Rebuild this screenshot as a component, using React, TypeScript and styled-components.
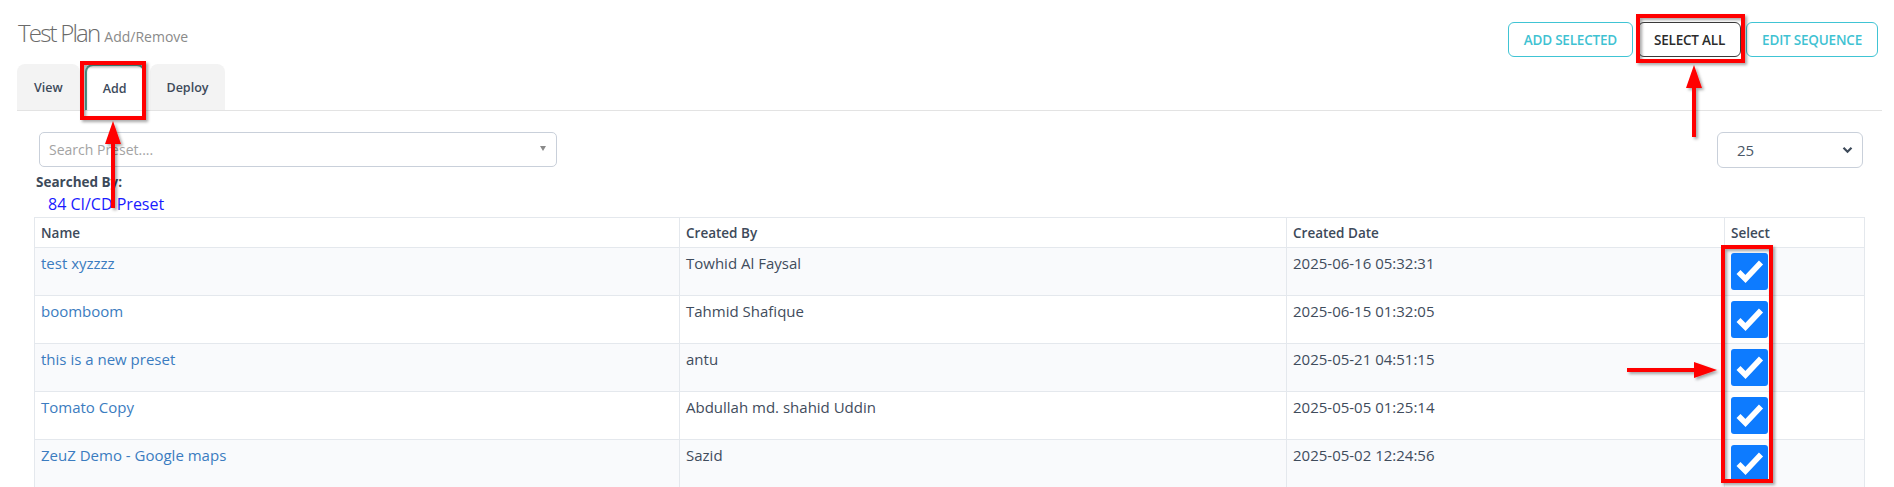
import * as React from 'react';
import styled, { createGlobalStyle } from 'styled-components';

const GlobalStyle = createGlobalStyle`
  body {
    margin: 0;
    background: #fff;
    font-family: 'Open Sans', 'Liberation Sans', sans-serif;
    color: #3d4a5a;
  }
`;

type Preset = {
  name: string;
  createdBy: string;
  createdDate: string;
};

const presets: Preset[] = [
  { name: 'test xyzzzz', createdBy: 'Towhid Al Faysal', createdDate: '2025-06-16 05:32:31' },
  { name: 'boomboom', createdBy: 'Tahmid Shafique', createdDate: '2025-06-15 01:32:05' },
  { name: 'this is a new preset', createdBy: 'antu', createdDate: '2025-05-21 04:51:15' },
  { name: 'Tomato Copy', createdBy: 'Abdullah md. shahid Uddin', createdDate: '2025-05-05 01:25:14' },
  { name: 'ZeuZ Demo - Google maps', createdBy: 'Sazid', createdDate: '2025-05-02 12:24:56' },
];

const tabs = ['View', 'Add', 'Deploy'];

export default function App() {
  return (
    <Page>
      <GlobalStyle />
      <TopBar>
        <Title>
          <TitleMain>Test Plan</TitleMain>
          <Subtitle>Add/Remove</Subtitle>
        </Title>
        <ButtonGroup>
          <OutlineButton>Add Selected</OutlineButton>
          <OutlineButton dark>Select All</OutlineButton>
          <OutlineButton>Edit Sequence</OutlineButton>
        </ButtonGroup>
      </TopBar>

      <TabBar>
        {tabs.map((t) => (
          <Tab key={t} active={t === 'Add'}>
            {t}
          </Tab>
        ))}
      </TabBar>

      <FilterRow>
        <SearchBox>
          <Placeholder>Search Preset....</Placeholder>
          <Caret />
        </SearchBox>
        <PageSize>
          <span>25</span>
          <svg width="11" height="8" viewBox="0 0 11 8">
            <path d="M1.5 1.8 L5.5 5.8 L9.5 1.8" fill="none" stroke="#3d4a5a" strokeWidth="2.2" />
          </svg>
        </PageSize>
      </FilterRow>

      <SearchedBy>Searched By:</SearchedBy>
      <ResultCount>84 CI/CD Preset</ResultCount>

      <TableWrap>
        <Table>
          <colgroup>
            <col style={{ width: 645 }} />
            <col style={{ width: 607 }} />
            <col style={{ width: 438 }} />
            <col style={{ width: 140 }} />
          </colgroup>
          <thead>
            <tr>
              <Th>Name</Th>
              <Th>Created By</Th>
              <Th>Created Date</Th>
              <Th>Select</Th>
            </tr>
          </thead>
          <tbody>
            {presets.map((p, i) => (
              <Row key={p.name} striped={i % 2 === 0}>
                <Td>
                  <NameLink>{p.name}</NameLink>
                </Td>
                <Td>{p.createdBy}</Td>
                <Td>{p.createdDate}</Td>
                <Td>
                  <CheckBox>
                    <svg width="37" height="37" viewBox="0 0 37 37">
                      <path d="M7.5 19 L14.5 26 L30 9.5" fill="none" stroke="#fff" strokeWidth="5.6" />
                    </svg>
                  </CheckBox>
                </Td>
              </Row>
            ))}
          </tbody>
        </Table>
      </TableWrap>

      <Annotations width="1894" height="487" viewBox="0 0 1894 487">
        <defs>
          <filter id="shadow" x="-20%" y="-20%" width="140%" height="140%">
            <feDropShadow dx="2" dy="2" stdDeviation="1.5" floodColor="#000" floodOpacity="0.35" />
          </filter>
        </defs>
        <g filter="url(#shadow)" fill="none" stroke="#f00" strokeWidth="4">
          <rect x="82" y="63" width="62" height="55" />
          <rect x="1638" y="16" width="105" height="45" />
          <rect x="1723" y="247" width="48" height="234" />
        </g>
        <g filter="url(#shadow)" fill="#f00">
          <rect x="111" y="140" width="4" height="68" />
          <polygon points="113,121 105,144 121,144" />
          <rect x="1692" y="84" width="4" height="53" />
          <polygon points="1694,65 1686,88 1702,88" />
          <rect x="1627" y="368" width="70" height="4" />
          <polygon points="1717,370 1694,362 1694,378" />
        </g>
      </Annotations>
    </Page>
  );
}

const Page = styled.div`
  position: relative;
  width: 1894px;
  height: 487px;
  overflow: hidden;
  padding: 0 12px 0 17px;
  box-sizing: border-box;
`;

const TopBar = styled.div`
  display: flex;
  justify-content: space-between;
  align-items: flex-start;
  height: 64px;
`;

const Title = styled.h1`
  margin: 18px 0 0 1px;
  display: flex;
  align-items: baseline;
  gap: 5px;
  font-weight: 400;
`;

const TitleMain = styled.span`
  font-size: 24px;
  font-weight: 300;
  line-height: 30px;
  color: #6a6a6a;
  letter-spacing: -1.8px;
`;

const Subtitle = styled.small`
  font-size: 14px;
  font-weight: 400;
  color: #8a8a8a;
`;

const ButtonGroup = styled.div`
  display: flex;
  gap: 5px;
  margin: 22px 4px 0 0;
`;

const OutlineButton = styled.button<{ dark?: boolean }>`
  height: 35px;
  padding: 0 15px;
  background: #fff;
  border: 1px solid ${({ dark }) => (dark ? '#3a3a3a' : '#40c4d4')};
  border-radius: 6px;
  color: ${({ dark }) => (dark ? '#2b2b2b' : '#3fc2d2')};
  font-family: 'Open Sans', sans-serif;
  font-size: 13.5px;
  font-weight: 600;
  text-transform: uppercase;
  letter-spacing: -0.2px;
`;

const TabBar = styled.div`
  display: flex;
  gap: 5px;
  height: 46px;
  border-bottom: 1px solid #e3e3e3;
`;

const Tab = styled.div<{ active?: boolean }>`
  display: flex;
  align-items: center;
  padding: 0 ${({ active }) => (active ? '16px' : '17px')};
  background: ${({ active }) => (active ? '#fff' : '#f3f3f3')};
  border: ${({ active }) => (active ? '2px solid #55a597' : 'none')};
  border-bottom: none;
  border-radius: 8px 8px 0 0;
  font-size: 12.5px;
  font-weight: 600;
  color: #3d4a5a;
`;

const FilterRow = styled.div`
  display: flex;
  justify-content: space-between;
  margin: 21px 19px 0 22px;
`;

const SearchBox = styled.div`
  width: 518px;
  height: 35px;
  box-sizing: border-box;
  border: 1px solid #c9d0da;
  border-radius: 5px;
  display: flex;
  align-items: center;
  justify-content: space-between;
  padding: 0 10px 0 9px;
`;

const Placeholder = styled.span`
  font-size: 14px;
  color: #a3a3a3;
`;

const Caret = styled.span`
  width: 0;
  height: 0;
  border-left: 3.5px solid transparent;
  border-right: 3.5px solid transparent;
  border-top: 5px solid #8a8a8a;
  margin-top: -3px;
`;

const PageSize = styled.div`
  width: 146px;
  height: 36px;
  box-sizing: border-box;
  border: 1px solid #c9d0da;
  border-radius: 6px;
  display: flex;
  align-items: center;
  justify-content: space-between;
  padding: 0 9px 0 19px;
  font-size: 15px;
  color: #4a5868;
`;

const SearchedBy = styled.div`
  margin: 4px 0 0 19px;
  font-size: 13.5px;
  font-weight: 700;
  line-height: 20px;
  color: #3d4a5a;
`;

const ResultCount = styled.div`
  margin-left: 31px;
  font-size: 16px;
  line-height: 25px;
  color: #1a1aff;
`;

const TableWrap = styled.div`
  margin: 0 18px 0 17px;
`;

const Table = styled.table`
  width: 100%;
  table-layout: fixed;
  border-collapse: collapse;
  border: 1px solid #e4e8ed;
`;

const Th = styled.th`
  height: 30px;
  padding: 3px 6px;
  box-sizing: border-box;
  text-align: left;
  font-size: 13.5px;
  font-weight: 600;
  color: #3d4a5a;
  border: 1px solid #e4e8ed;
`;

const Row = styled.tr<{ striped?: boolean }>`
  background: ${({ striped }) => (striped ? '#f9fafc' : '#fff')};
`;

const Td = styled.td`
  height: 48px;
  box-sizing: border-box;
  padding: 4px 6px;
  vertical-align: top;
  font-size: 15px;
  line-height: 22px;
  color: #3f4c5c;
  border: 1px solid #e4e8ed;
`;

const NameLink = styled.span`
  color: #3b7cc0;
`;

const CheckBox = styled.div`
  width: 37px;
  height: 37px;
  margin-top: 1px;
  background: #0d7bff;
  border-radius: 3px;
  svg {
    display: block;
  }
`;

const Annotations = styled.svg`
  position: absolute;
  top: 0;
  left: 0;
  pointer-events: none;
`;
